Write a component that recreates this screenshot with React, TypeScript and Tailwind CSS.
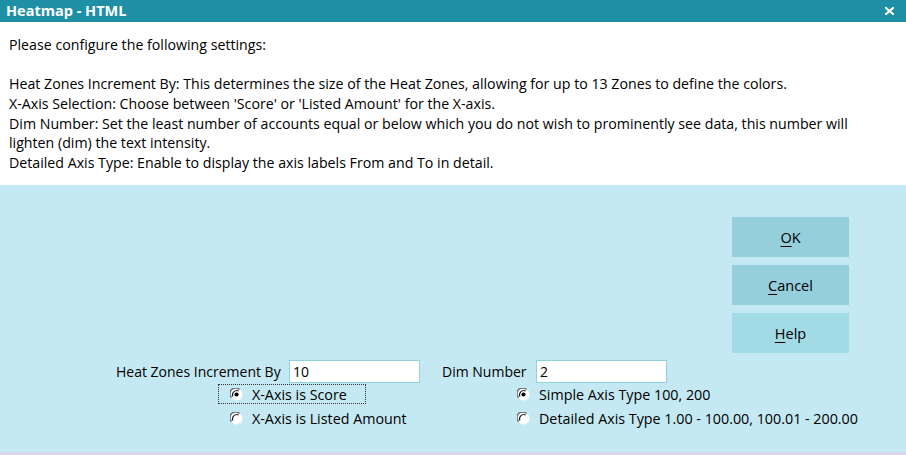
import React from "react";

const font = { fontFamily: '"Open Sans", "Noto Sans", sans-serif' };

function Radio({ checked }: { checked: boolean }) {
  return (
    <svg width="13" height="13" viewBox="0 0 13 13" className="shrink-0">
      <circle cx="6.5" cy="6.5" r="6" fill="#ffffff" />
      <path d="M1.6 9.6 A5.6 5.6 0 0 1 9.6 1.6" stroke="#6e6e6e" strokeWidth="1.4" fill="none" />
      <path d="M2.9 8.6 A4.3 4.3 0 0 1 8.6 2.9" stroke="#1a1a1a" strokeWidth="1.1" fill="none" />
      {checked && <circle cx="6.5" cy="6.5" r="2.1" fill="#000" />}
    </svg>
  );
}

function Btn({ label, u, light }: { label: string; u: string; light?: boolean }) {
  const rest = label.slice(1);
  return (
    <div
      className={`w-[117px] h-[40px] flex items-center justify-center text-[14.5px] text-black pt-[2px] ${
        light ? "bg-[#a2dbe5]" : "bg-[#95cfdb]"
      }`}
    >
      <span>
        <span className="underline underline-offset-[3px]">{u}</span>
        {rest}
      </span>
    </div>
  );
}

export default function App() {
  return (
    <div className="w-[906px] h-[455px] flex flex-col bg-white overflow-hidden text-[#000]" style={font}>
      <div className="h-[22px] bg-[#1f8fa6] flex items-center justify-between pl-[6px] pr-[12px]">
        <span className="text-white font-bold text-[14.5px] leading-none">Heatmap - HTML</span>
        <svg width="9" height="8" viewBox="0 0 9 8" className="mb-[1px]">
          <path d="M1 1 L8 7 M8 1 L1 7" stroke="#ffffff" strokeWidth="2.2" strokeLinecap="square" />
        </svg>
      </div>
      <div className="h-[163px] px-[9px] pt-[13px] text-[14.2px] leading-[19.67px]">
        <div>Please configure the following settings:</div>
        <div>&nbsp;</div>
        <div>Heat Zones Increment By: This determines the size of the Heat Zones, allowing for up to 13 Zones to define the colors.</div>
        <div>X-Axis Selection: Choose between 'Score' or 'Listed Amount' for the X-axis.</div>
        <div>Dim Number: Set the least number of accounts equal or below which you do not wish to prominently see data, this number will</div>
        <div>lighten (dim) the text intensity.</div>
        <div>Detailed Axis Type: Enable to display the axis labels From and To in detail.</div>
      </div>
      <div className="flex-1 bg-[#c5e9f2] relative flex flex-col">
        <div className="flex justify-end pr-[57px] pt-[32px]">
          <div className="flex flex-col gap-[8px]">
            <Btn label="OK" u="O" />
            <Btn label="Cancel" u="C" />
            <Btn label="Help" u="H" light />
          </div>
        </div>
        <div className="flex pl-[116px] pt-[7px] text-[14px]">
          <div className="flex flex-col">
            <div className="flex items-center h-[23px]">
              <span className="w-[173px]">Heat Zones Increment By</span>
              <div className="w-[131px] h-[23px] bg-white border border-[#8fd3df] px-[3px] flex items-center">10</div>
            </div>
            <div className="ml-[102px] mt-[1px] w-[148px] h-[20px] border border-dotted border-[#333] flex items-center pl-[11px] gap-[9px] pt-[1px]">
              <Radio checked />
              <span className="text-[14.3px]">X-Axis is Score</span>
            </div>
            <div className="ml-[102px] mt-[4px] h-[20px] flex items-center pl-[12px] gap-[9px] pt-[1px]">
              <Radio checked={false} />
              <span className="text-[14.3px]">X-Axis is Listed Amount</span>
            </div>
          </div>
          <div className="flex flex-col ml-[22px]">
            <div className="flex items-center h-[23px]">
              <span className="w-[94px]">Dim Number</span>
              <div className="w-[131px] h-[23px] bg-white border border-[#8fd3df] px-[3px] flex items-center">2</div>
            </div>
            <div className="ml-[75px] mt-[1px] h-[20px] flex items-center gap-[9px] pt-[1px]">
              <Radio checked />
              <span className="text-[14.3px]">Simple Axis Type 100, 200</span>
            </div>
            <div className="ml-[75px] mt-[4px] h-[20px] flex items-center gap-[9px] pt-[1px]">
              <Radio checked={false} />
              <span className="text-[14.3px]">Detailed Axis Type 1.00 - 100.00, 100.01 - 200.00</span>
            </div>
          </div>
        </div>
        <div className="absolute bottom-0 left-0 right-0 h-[3px] bg-[#d6d6ec]" />
      </div>
    </div>
  );
}
